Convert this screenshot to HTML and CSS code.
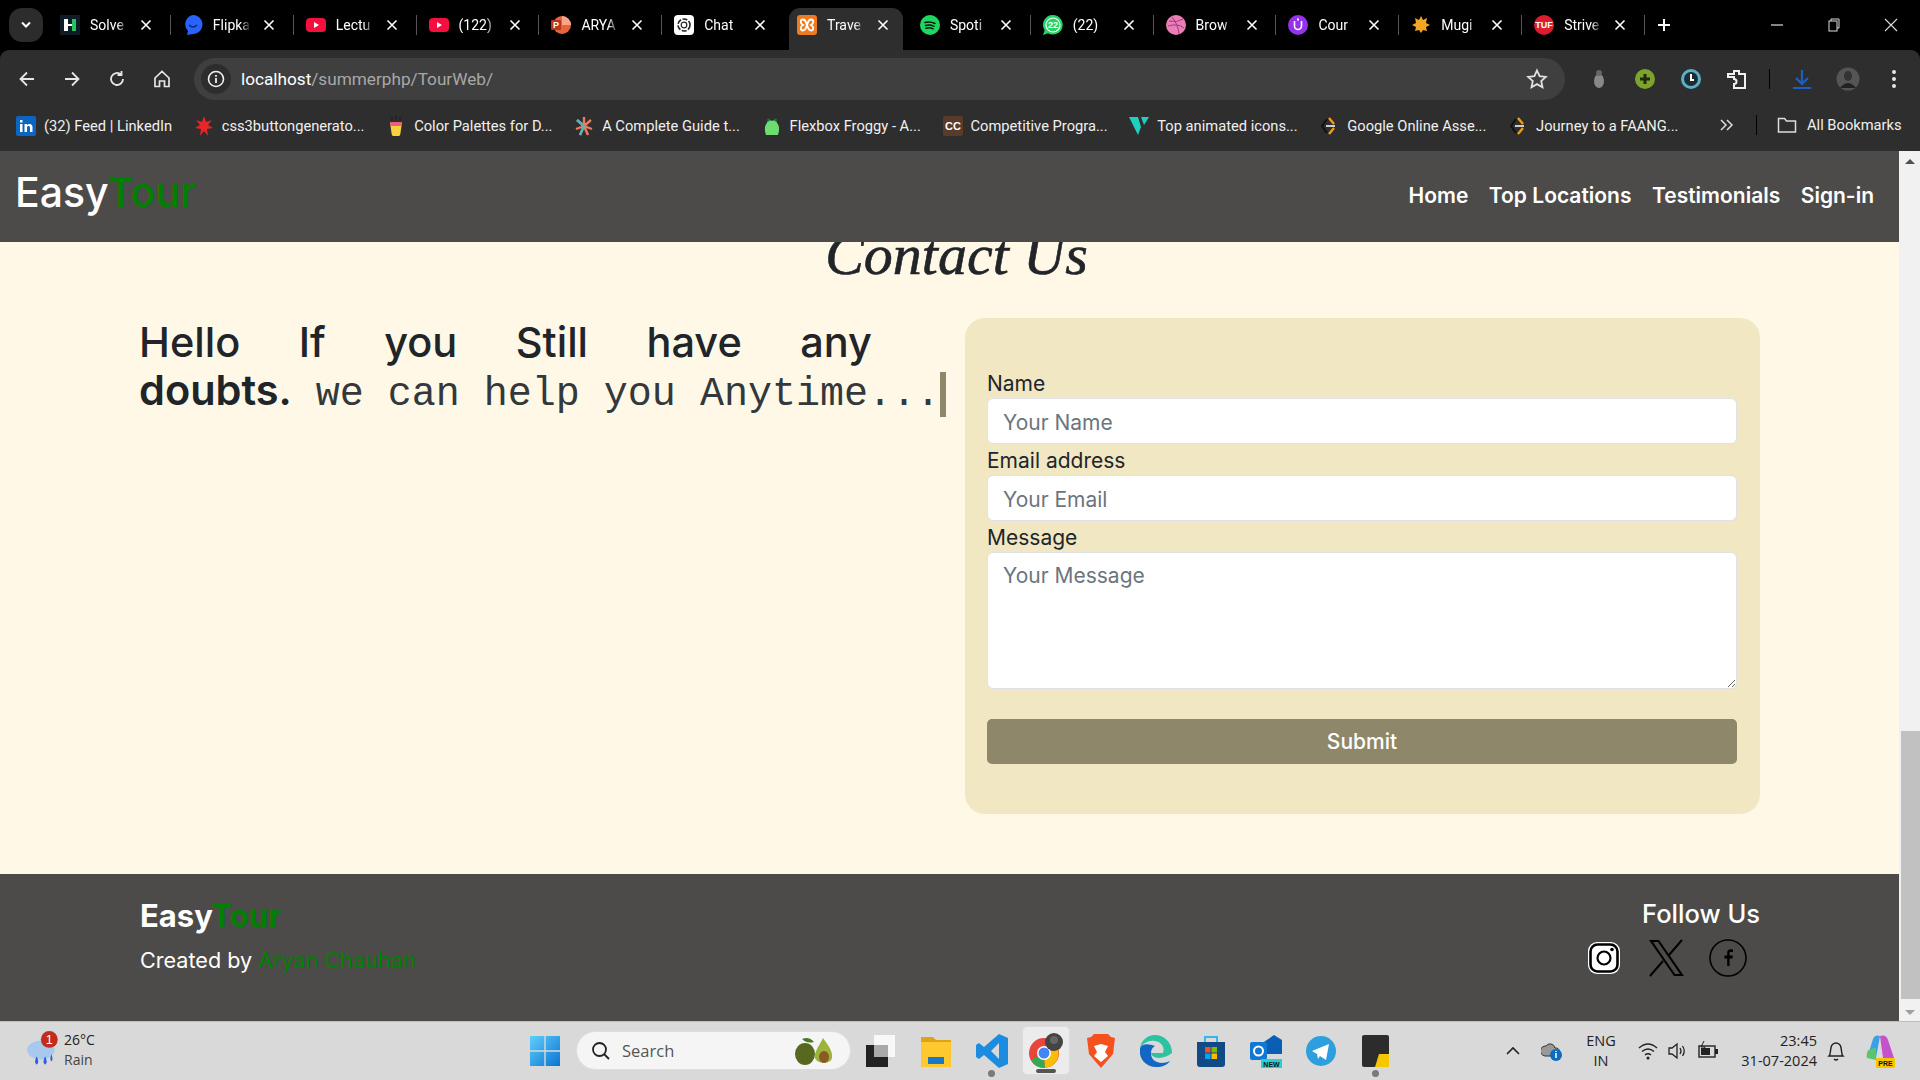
FILE: index.html
```html
<!DOCTYPE html>
<html lang="en">
<head>
<meta charset="utf-8">
<title>EasyTour - Contact</title>
<link rel="stylesheet" href="styles.css">
</head>
<body>
<svg class="defs" width="0" height="0">
  <symbol id="x" viewBox="0 0 14 14"><path d="M2.5 2.5l9 9M11.5 2.5l-9 9" stroke="#fff" stroke-width="1.6" fill="none"/></symbol>
  <symbol id="yt" viewBox="0 0 20 20"><rect x="0" y="3" width="20" height="14" rx="4" fill="#f40f3f"/><path d="M8 7l5 3-5 3z" fill="#fff"/></symbol>
  <symbol id="ga" viewBox="0 0 20 20"><path d="M8 3L3 10l5 7" fill="none" stroke="#111" stroke-width="2"/><path d="M10 2l5 6M15 12l-5 6" fill="none" stroke="#f39c12" stroke-width="2.4"/><rect x="7" y="9" width="9" height="2" fill="#ccc"/></symbol>
</svg>

<header class="chrome">
  <div class="tabstrip">
    <div class="tabmenu"><svg width="12" height="8" viewBox="0 0 12 8"><path d="M2 1.5l4 4 4-4" fill="none" stroke="#fff" stroke-width="2"/></svg></div>
    <div class="tab"><svg class="fav" viewBox="0 0 20 20"><rect width="20" height="20" fill="#0f1b26"/><rect x="4" y="4" width="4" height="12" fill="#fff"/><rect x="8" y="9" width="4" height="2" fill="#fff"/><rect x="12" y="4" width="4" height="12" fill="#22c55e"/></svg><span class="tabtitle">Solve</span><svg class="close"><use href="#x"/></svg></div>
    <div class="tab"><svg class="fav" viewBox="0 0 20 20"><path d="M10 0a9.500 9.500 0 0 1 3 18.500L4 20l1-4A9.500 9.500 0 0 1 10 0z" fill="#2962ff"/><path d="M6 10q4 4 8 0" stroke="#0d2a80" stroke-width="1.500" fill="none"/></svg><span class="tabtitle">Flipka</span><svg class="close"><use href="#x"/></svg></div>
    <div class="tab"><svg class="fav"><use href="#yt"/></svg><span class="tabtitle">Lectu</span><svg class="close"><use href="#x"/></svg></div>
    <div class="tab"><svg class="fav"><use href="#yt"/></svg><span class="tabtitle">(122)</span><svg class="close"><use href="#x"/></svg></div>
    <div class="tab"><svg class="fav" viewBox="0 0 20 20"><circle cx="11" cy="10" r="9" fill="#e8633a"/><path d="M11 1a9 9 0 0 1 9 9h-9z" fill="#f4a58c"/><rect x="0" y="5" width="10" height="10" rx="1" fill="#b7361a"/><text x="5" y="13" class="favtext" fill="#fff">P</text></svg><span class="tabtitle">ARYA</span><svg class="close"><use href="#x"/></svg></div>
    <div class="tab before-active"><svg class="fav" viewBox="0 0 20 20"><rect width="20" height="20" rx="4" fill="#fff"/><circle cx="10" cy="10" r="6" fill="none" stroke="#222" stroke-width="1.600" stroke-dasharray="5 1.500"/><circle cx="10" cy="10" r="2.800" fill="none" stroke="#222" stroke-width="1.200"/></svg><span class="tabtitle">Chat</span><svg class="close"><use href="#x"/></svg></div>
    <div class="tab active"><svg class="fav" viewBox="0 0 20 20"><rect width="20" height="20" rx="3" fill="#ee7a22"/><path d="M6 4.500c-3 0-3 4 0 5.500-3 1.500-3 5.500 0 5.500S9 12 10 10c1 2 1 5.500 4 5.500s3-4 0-5.500c3-1.500 3-5.500 0-5.500S11 8 10 10C9 8 9 4.500 6 4.500z" fill="none" stroke="#fff" stroke-width="1.800"/></svg><span class="tabtitle">Trave</span><svg class="close"><use href="#x"/></svg></div>
    <div class="tab"><svg class="fav" viewBox="0 0 20 20"><circle cx="10" cy="10" r="10" fill="#1ed760"/><path d="M5 7.500q5-1.500 10 1M5.500 10.500q4.500-1.200 8.500.8M6 13.200q4-1 7 .7" fill="none" stroke="#111" stroke-width="1.500" stroke-linecap="round"/></svg><span class="tabtitle">Spoti</span><svg class="close"><use href="#x"/></svg></div>
    <div class="tab"><svg class="fav" viewBox="0 0 20 20"><path d="M10 0a9.800 9.800 0 1 1-5 18.300L0 20l1.700-4.800A9.800 9.800 0 0 1 10 0z" fill="#25d366"/><circle cx="10" cy="10" r="7.600" fill="#fff"/><circle cx="10" cy="10" r="6.500" fill="#25d366"/><text x="10" y="13" class="favtext" fill="#fff">22</text></svg><span class="tabtitle">(22)</span><svg class="close"><use href="#x"/></svg></div>
    <div class="tab"><svg class="fav" viewBox="0 0 20 20"><circle cx="10" cy="10" r="10" fill="#ea7fb8"/><path d="M3 6q8 2 14-2M2 11q10-3 16 2M6 2q6 7 7 17" fill="none" stroke="#a33d78" stroke-width="1"/></svg><span class="tabtitle">Brow</span><svg class="close"><use href="#x"/></svg></div>
    <div class="tab"><svg class="fav" viewBox="0 0 20 20"><circle cx="10" cy="10" r="10" fill="#9333ea"/><path d="M6.500 6v5a3.500 3.500 0 0 0 7 0V6" fill="none" stroke="#fff" stroke-width="1.600"/><rect x="9" y="3.500" width="2" height="2" fill="#fff"/></svg><span class="tabtitle">Cour</span><svg class="close"><use href="#x"/></svg></div>
    <div class="tab"><svg class="fav" viewBox="0 0 20 20"><path d="M10 1l2 4 4-2-1 5 4 2-4 2 1 4-4-1-2 3-2-3-4 1 1-4-4-2 4-2-1-5 4 2z" fill="#f5a623"/></svg><span class="tabtitle">Mugi</span><svg class="close"><use href="#x"/></svg></div>
    <div class="tab"><svg class="fav" viewBox="0 0 20 20"><circle cx="10" cy="10" r="10" fill="#dd1c2f"/><text x="10" y="12.500" class="favtext" fill="#fff">TUF</text></svg><span class="tabtitle">Strive</span><svg class="close"><use href="#x"/></svg></div>
    <svg class="newtab" width="16" height="16" viewBox="0 0 16 16"><path d="M8 2v12M2 8h12" stroke="#fff" stroke-width="2"/></svg>
    <div class="winctl">
      <svg width="14" height="14" viewBox="0 0 14 14"><path d="M1 7h12" stroke="#ddd" stroke-width="1.200"/></svg>
      <svg width="14" height="14" viewBox="0 0 14 14"><path d="M4 3V1h8v9h-2" fill="none" stroke="#ddd"/><rect x="2" y="3" width="8" height="10" fill="none" stroke="#ddd"/></svg>
      <svg width="14" height="14" viewBox="0 0 14 14"><path d="M1 1l12 12M13 1L1 13" stroke="#ddd" stroke-width="1.100"/></svg>
    </div>
  </div>

  <div class="toolbar">
    <svg class="tbicon" viewBox="0 0 20 20"><path d="M17 10H4M10 3.500L3.500 10l6.500 6.500" fill="none" stroke="#e6e6e6" stroke-width="1.800"/></svg>
    <svg class="tbicon" viewBox="0 0 20 20"><path d="M3 10h13M10 3.500l6.500 6.500-6.500 6.500" fill="none" stroke="#e6e6e6" stroke-width="1.800"/></svg>
    <svg class="tbicon" viewBox="0 0 20 20"><path d="M16 10a6 6 0 1 1-2-4.500M14.500 2v4h-4" fill="none" stroke="#e6e6e6" stroke-width="1.800"/></svg>
    <svg class="tbicon" viewBox="0 0 20 20"><path d="M3 9l7-6.500L17 9v8.500h-4.500V12h-5v5.500H3z" fill="none" stroke="#e6e6e6" stroke-width="1.700"/></svg>
    <div class="omnibox">
      <span class="siteinfo"><svg width="18" height="18" viewBox="0 0 18 18"><circle cx="9" cy="9" r="7.500" fill="none" stroke="#f0f0f0" stroke-width="1.600"/><path d="M9 8v5M9 5v1.800" stroke="#f0f0f0" stroke-width="1.800"/></svg></span>
      <span class="url"><span class="host">localhost</span>/summerphp/TourWeb/</span>
      <svg class="star" width="22" height="22" viewBox="0 0 22 22"><path d="M11 2.500l2.600 5.700 6.200.7-4.600 4.200 1.300 6.100L11 16.100l-5.500 3.100 1.300-6.100-4.600-4.200 6.200-.7z" fill="none" stroke="#e2e2e2" stroke-width="1.800"/></svg>
    </div>
    <div class="extensions">
      <svg class="ext" viewBox="0 0 24 24"><ellipse cx="12" cy="14" rx="5" ry="7" fill="#888"/><circle cx="12" cy="6" r="3" fill="#666"/></svg>
      <svg class="ext" viewBox="0 0 24 24"><circle cx="12" cy="12" r="10" fill="#7ea32c"/><path d="M12 7v10M7 12h10" stroke="#1d2a0b" stroke-width="3"/></svg>
      <svg class="ext" viewBox="0 0 24 24"><circle cx="12" cy="12" r="10" fill="#5bb0c8"/><circle cx="12" cy="12" r="7" fill="#1d2b33"/><path d="M12 7v6h3" stroke="#fff" stroke-width="2" fill="none"/></svg>
      <svg class="ext" viewBox="0 0 24 24"><path d="M3 7h6V4h5v3h6v14H9v-4a2.500 2.500 0 0 0 0-5V10H3z" fill="none" stroke="#f0f0f0" stroke-width="2"/></svg>
      <span class="tbsep"></span>
      <svg class="ext" viewBox="0 0 24 24"><path d="M12 3v13M6 11l6 6 6-6M3 21h18" fill="none" stroke="#1c5fc4" stroke-width="2.200"/></svg>
      <svg class="ext" viewBox="0 0 24 24"><circle cx="12" cy="12" r="11.500" fill="#555"/><ellipse cx="12" cy="9" rx="4" ry="5" fill="#333"/><path d="M4 21q8-10 16 0" fill="#222"/></svg>
      <svg class="ext" viewBox="0 0 24 24"><circle cx="12" cy="5" r="2" fill="#e6e6e6"/><circle cx="12" cy="12" r="2" fill="#e6e6e6"/><circle cx="12" cy="19" r="2" fill="#e6e6e6"/></svg>
    </div>
  </div>

  <nav class="bookmarks">
    <a class="bm"><svg class="bmi" viewBox="0 0 20 20"><rect width="20" height="20" rx="2" fill="#0a66c2"/><path d="M4 8h2.500v8H4zM4 4h2.500v2.400H4zM8.500 8H11v1.200C12 7.500 16.500 7 16.500 11v5H14v-4.500c0-2-3-2-3 0V16H8.500z" fill="#fff"/></svg>(32) Feed | LinkedIn</a>
    <a class="bm"><svg class="bmi" viewBox="0 0 20 20"><path d="M10 0l2 6 6-2-4 5 5 3-6 1 1 7-4-5-4 5 1-7-6-1 5-3-4-5 6 2z" fill="#e8262a"/></svg>css3buttongenerato...</a>
    <a class="bm"><svg class="bmi" viewBox="0 0 20 20"><path d="M4 6h12l-1.500 11a4.500 4.500 0 0 1-9 0z" fill="#f7d23e"/><path d="M4 6h12l-.6 4H4.600z" fill="#ee5e7f"/><path d="M6 4V1M10 4V0M14 4V1" stroke="#222" stroke-width="1.500"/></svg>Color Palettes for D...</a>
    <a class="bm"><svg class="bmi" viewBox="0 0 20 20"><path d="M10 1v8M3 4l7 6M2 13l8-3M6 19l4-9M14 19l-4-9M18 13l-8-3M17 4l-7 6" stroke="#ef7b5a" stroke-width="2.400"/><path d="M3 4l7 6M6 19l4-9" stroke="#4db6c4" stroke-width="2.400"/></svg>A Complete Guide t...</a>
    <a class="bm"><svg class="bmi" viewBox="0 0 20 20"><path d="M4 19c-2-6-1-10 1-12a3 3 0 0 1 5-2 3 3 0 0 1 5 2c2 2 3 6 1 12z" fill="#6fdc6f"/><circle cx="6.500" cy="4" r="1.400" fill="#174"/><circle cx="13.500" cy="4" r="1.400" fill="#174"/></svg>Flexbox Froggy - A...</a>
    <a class="bm"><svg class="bmi" viewBox="0 0 20 20"><rect width="20" height="20" rx="2" fill="#5a3a28"/><text x="10" y="14" class="favtext cc" fill="#fff">CC</text></svg>Competitive Progra...</a>
    <a class="bm"><svg class="bmi" viewBox="0 0 20 20"><path d="M0 1h9l3 10-3 8zM12 1h8l-5 8z" fill="#1fd0c0"/></svg>Top animated icons...</a>
    <a class="bm"><svg class="bmi"><use href="#ga"/></svg>Google Online Asse...</a>
    <a class="bm"><svg class="bmi"><use href="#ga"/></svg>Journey to a FAANG...</a>
    <svg class="bmmore" width="16" height="16" viewBox="0 0 16 16"><path d="M3 3l5 5-5 5M9 3l5 5-5 5" fill="none" stroke="#ddd" stroke-width="1.500"/></svg>
    <span class="bmsep"></span>
    <a class="bm allbm"><svg class="bmi" viewBox="0 0 20 20"><path d="M1.500 3.500h6l2 2.500h9v11h-17z" fill="none" stroke="#ddd" stroke-width="1.500"/></svg>All Bookmarks</a>
  </nav>
</header>

<div class="viewport">
  <div class="page">
    <div class="sitenav">
      <div class="brand">Easy<span class="green">Tour</span></div>
      <ul class="navlinks">
        <li>Home</li>
        <li>Top Locations</li>
        <li>Testimonials</li>
        <li>Sign-in</li>
      </ul>
    </div>
    <main class="contact">
      <h1 class="contact-title">Contact Us</h1>
      <div class="contact-body">
        <div class="pitch">
          <p class="pitch-line">Hello If you Still have any</p>
          <p class="pitch-second"><strong>doubts.</strong> <span class="typed">we can help you Anytime...</span></p>
        </div>
        <form class="card">
          <label class="label" for="n">Name</label>
          <input class="field" id="n" type="text" placeholder="Your Name">
          <label class="label" for="e">Email address</label>
          <input class="field" id="e" type="email" placeholder="Your Email">
          <label class="label" for="m">Message</label>
          <textarea class="field area" id="m" placeholder="Your Message"></textarea>
          <button class="submit" type="button">Submit</button>
        </form>
      </div>
    </main>
    <footer class="footer">
      <div>
        <div class="foot-brand">Easy<span class="green">Tour</span></div>
        <div class="credit">Created by <span class="green">Aryan Chauhan</span></div>
      </div>
      <div class="follow">
        <div class="follow-title">Follow Us</div>
        <div class="socials">
          <svg class="ig" width="34" height="34" viewBox="0 0 34 34"><rect x="1" y="1" width="32" height="32" rx="9" fill="#fff"/><rect x="3.500" y="3.500" width="27" height="27" rx="7" fill="#fff" stroke="#000" stroke-width="2.600"/><circle cx="17" cy="17" r="6.500" fill="none" stroke="#000" stroke-width="2.200"/><circle cx="25" cy="8.500" r="1.800" fill="#000"/></svg>
          <svg class="xlogo" width="37" height="38" viewBox="0 0 37 38"><path d="M1 1h10l25 36H26zM5 3l22 32h5L10 3z" fill="#000" fill-rule="evenodd"/><path d="M34 1L21 16M15 22L2 37" stroke="#000" stroke-width="2" fill="none"/></svg>
          <svg class="fb" width="38" height="38" viewBox="0 0 38 38"><circle cx="19" cy="19" r="18" fill="none" stroke="#000" stroke-width="1.600"/><path d="M20.500 27v-7.500h3l.4-3h-3.400v-2c0-.9.3-1.400 1.500-1.400h2v-2.700c-2.900-.4-5.800-.2-5.800 3.700v2.400h-2.700v3h2.700V27z" fill="#000"/></svg>
        </div>
      </div>
    </footer>
  </div>
  <aside class="scrollbar">
    <span class="sb-up"></span>
    <span class="sb-track"><span class="sb-thumb"></span></span>
    <span class="sb-down"></span>
  </aside>
</div>

<div class="taskbar">
  <div class="weather">
    <svg width="34" height="40" viewBox="0 0 32 38"><ellipse cx="14" cy="18" rx="13" ry="9" fill="#a9c8ee"/><path d="M10 24q-3 6 0 8 3-2 0-8zM18 24q-3 6 0 8 3-2 0-8zM24 22q-2 5 0 7 2-2 0-7z" fill="#2a5fe0"/><circle cx="22" cy="8" r="8" fill="#c42b1c"/><text x="22" y="12" class="favtext badge" fill="#fff">1</text></svg>
    <div class="weather-text"><span>26°C</span><span>Rain</span></div>
  </div>
  <div class="tb-center">
    <svg class="winlogo" width="30" height="30" viewBox="0 0 30 30"><defs><linearGradient id="w" x1="0" y1="0" x2="1" y2="1"><stop offset="0" stop-color="#5fd0fb"/><stop offset="1" stop-color="#0a73d1"/></linearGradient></defs><path d="M0 0h14.300v14.300H0zM15.700 0H30v14.300H15.700zM0 15.700h14.300V30H0zM15.700 15.700H30V30H15.700z" fill="url(#w)"/></svg>
    <div class="searchbox">
      <svg width="20" height="20" viewBox="0 0 20 20"><circle cx="8.500" cy="8.500" r="6.500" fill="none" stroke="#222" stroke-width="1.800"/><path d="M13 13l5 5" stroke="#222" stroke-width="1.800"/></svg>
      <span class="search-text">Search</span>
      <svg class="avocado" width="40" height="30" viewBox="0 0 40 30"><ellipse cx="11" cy="18" rx="10" ry="11" fill="#56691f"/><path d="M29 2c6 8 10 14 9 20-1 6-14 7-17 0-1-6 4-12 8-20z" fill="#9bb43a"/><ellipse cx="30" cy="21" rx="5" ry="6" fill="#8a5a26"/><path d="M8 3q7-3 12 3-7 2-12-3z" fill="#4e7a28"/></svg>
    </div>
    <svg class="tv" width="30" height="32" viewBox="0 0 30 32"><rect x="8" y="0" width="21" height="22" fill="#f8f8f8"/><rect x="0" y="10" width="22" height="22" fill="#222"/><rect x="8" y="10" width="14" height="12" fill="#aaa"/></svg>
    <svg class="folder" width="30" height="32" viewBox="0 0 30 32"><path d="M0 2h12l3 3h15v5H0z" fill="#e0a21a"/><rect y="7" width="30" height="25" fill="#fdc92f"/><rect x="7" y="22" width="16" height="7" fill="#1a78c9"/></svg>
    <div class="app"><svg width="32" height="34" viewBox="0 0 32 34"><path d="M23 0l9 4v26l-9 4-15-13-5 4-3-2V11l3-2 5 4zM23 9l-8 8 8 8z" fill="#1c8ce0" fill-rule="evenodd"/></svg><span class="dot"></span></div>
    <div class="app chrome-app"><svg width="36" height="36" viewBox="0 0 36 36"><circle cx="16" cy="20" r="15" fill="#e8453c"/><path d="M16 20L3 27a15 15 0 0 0 14 8z" fill="#34a853"/><path d="M16 20l14-4a15 15 0 0 1-13 19z" fill="#fbbc05"/><circle cx="16" cy="20" r="7" fill="#fff"/><circle cx="16" cy="20" r="5.500" fill="#4285f4"/><circle cx="26" cy="9" r="9" fill="#444"/><circle cx="26" cy="7" r="4" fill="#666"/></svg><span class="dash"></span></div>
    <div class="app"><svg width="28" height="34" viewBox="0 0 28 34"><path d="M7 0h14l3 3 4 1-2 16-12 14L2 20 0 4l4-1z" fill="#f4511e"/><path d="M7 12l7-2 7 2-3 6 3 4-7 6-7-6 3-4z" fill="#fff"/></svg></div>
    <div class="app"><svg width="32" height="34" viewBox="0 0 32 34"><path d="M32 19C32 8 24 1 15 1 7 1 1 7 0 14c3-5 9-8 15-7 7 1 10 7 8 12H11c1 6 12 7 21 0z" fill="#2bc3a0"/><path d="M0 14c-2 11 7 20 17 19 5 0 10-2 13-6-8 4-19 2-19-8 0-4 2-6 4-7C9 10 3 9 0 14z" fill="#1266c4"/></svg></div>
    <div class="app"><svg width="30" height="34" viewBox="0 0 30 34"><path d="M9 8V3h12v5" fill="none" stroke="#35b6e8" stroke-width="2"/><path d="M1 8h28v22a3 3 0 0 1-3 3H4a3 3 0 0 1-3-3z" fill="#114b86"/><rect x="9" y="13" width="5.500" height="5.500" fill="#f25022"/><rect x="15.500" y="13" width="5.500" height="5.500" fill="#7fba00"/><rect x="9" y="19.500" width="5.500" height="5.500" fill="#00a4ef"/><rect x="15.500" y="19.500" width="5.500" height="5.500" fill="#ffb900"/></svg></div>
    <div class="app"><svg width="32" height="34" viewBox="0 0 32 34"><path d="M8 12L24 1l8 5v14H8z" fill="#0a5fb4"/><rect x="0" y="8" width="17" height="18" rx="2" fill="#0f78d4"/><circle cx="8.500" cy="17" r="4.500" fill="none" stroke="#fff" stroke-width="2"/><rect x="11" y="25" width="21" height="9" fill="#23d2d2"/><text x="21.500" y="32.500" class="favtext newbadge" fill="#111">NEW</text></svg></div>
    <div class="app"><svg width="30" height="30" viewBox="0 0 30 30"><circle cx="15" cy="15" r="15" fill="#2c9fdc"/><path d="M6 15L23 8l-3 16-6-4-2 3-1-5z" fill="#fff"/></svg></div>
    <div class="app"><svg width="27" height="32" viewBox="0 0 27 32"><rect width="27" height="32" rx="2" fill="#2c2c2c"/><path d="M13 32l4-13h10v13z" fill="#f6c700"/></svg><span class="dot"></span></div>
  </div>
  <div class="tb-right">
    <svg width="16" height="10" viewBox="0 0 16 10"><path d="M2 8l6-6 6 6" fill="none" stroke="#222" stroke-width="1.600"/></svg>
    <svg class="tr-cloud" width="22" height="22" viewBox="0 0 22 22"><path d="M4 16a5 5 0 0 1 1-10 5 5 0 0 1 9 2 4 4 0 0 1 1 8z" fill="#999" stroke="#333"/><circle cx="15" cy="15" r="6" fill="#0f6cbd"/><path d="M15 13v5M15 11v1" stroke="#fff" stroke-width="1.500"/></svg>
    <div class="lang"><span>ENG</span><span>IN</span></div>
    <svg class="tr-wifi" width="22" height="18" viewBox="0 0 22 18"><path d="M2 6q9-8 18 0M5 9.500q6-5 12 0M8 13q3-2.500 6 0" fill="none" stroke="#222" stroke-width="1.500"/><circle cx="11" cy="16" r="1.500" fill="#222"/></svg>
    <svg class="tr-vol" width="20" height="18" viewBox="0 0 20 18"><path d="M1 6h3l5-4v14l-5-4H1z" fill="none" stroke="#222" stroke-width="1.300"/><path d="M12 6q2 3 0 6M14.500 4q3.500 5 0 10" fill="none" stroke="#222" stroke-width="1.300"/></svg>
    <svg class="tr-batt" width="22" height="20" viewBox="0 0 22 20"><rect x="2" y="5" width="16" height="11" fill="none" stroke="#222" stroke-width="1.400"/><rect x="4" y="7" width="9" height="7" fill="#222"/><rect x="18" y="8" width="3" height="5" fill="#222"/><path d="M7 0L4 6h4l-2 5" fill="none" stroke="#222"/></svg>
    <div class="clock"><span>23:45</span><span>31-07-2024</span></div>
    <svg class="tr-bell" width="18" height="22" viewBox="0 0 18 22"><path d="M2 16c2-2 1-5 2-8a5 5 0 0 1 10 0c1 3 0 6 2 8z" fill="none" stroke="#222" stroke-width="1.400"/><path d="M7 19q2 2 4 0" fill="none" stroke="#222" stroke-width="1.400"/></svg>
    <svg class="tr-copilot" width="32" height="34" viewBox="0 0 32 34"><path d="M3 24L9 5q2-5 7-3L12 24z" fill="#3aa0e8"/><path d="M16 2q6-2 8 4l6 18H19z" fill="#c552c8"/><path d="M3 24q-2-10 9-10v12z" fill="#5cc46a"/><rect x="12" y="24" width="19" height="10" rx="1" fill="#f6c700"/><text x="21.500" y="32" class="favtext prebadge" fill="#111">PRE</text></svg>
  </div>
</div>
</body>
</html>
```

FILE: styles.css
```css
* { box-sizing: border-box; }
html, body { margin: 0; height: 100%; }
body {
  width: 1920px;
  height: 1080px;
  overflow: hidden;
  display: flex;
  flex-direction: column;
  font-family: Inter, "Open Sans", sans-serif;
  background: #000;
}
.defs { position: absolute; }
.green { color: #008000; }

/* browser chrome */
.chrome { flex: 0 0 151px; background: #000; font-family: Roboto, "Open Sans", sans-serif; color: #fff; }
.tabstrip { height: 50px; display: flex; align-items: center; padding-left: 9px; position: relative; }
.tabmenu { width: 34px; height: 34px; margin-right: 5px; border-radius: 13px; background: #2c2c2c; display: flex; align-items: center; justify-content: center; }
.tab { flex: 0 0 122.85px; height: 20px; padding-left: 12px; display: flex; align-items: center; border-right: 1px solid #555; font-size: 14px; }
.tab.active { flex-basis: 114px; height: 42px; align-self: flex-end; margin: 0 4.850px 0 4px; padding: 0 0 8px 8px; background: #2e2e2e; border-radius: 11px 11px 0 0; border-right: 0; }
.before-active { border-right: 0; }
.fav { width: 20px; height: 20px; flex: none; }
.tabtitle { width: 38px; margin-left: 10px; overflow: hidden; white-space: nowrap; -webkit-mask-image: linear-gradient(90deg, #000 72%, transparent); mask-image: linear-gradient(90deg, #000 72%, transparent); }
.close { width: 14px; height: 14px; margin-left: 11px; flex: none; }
.favtext { font-family: "Liberation Sans", sans-serif; font-size: 9px; font-weight: 700; text-anchor: middle; }
.favtext.cc { font-size: 11px; }
.favtext.badge { font-size: 12px; font-weight: 400; }
.favtext.newbadge, .favtext.prebadge { font-size: 7px; }
.newtab { margin-left: 11px; }
.winctl { position: absolute; right: 22px; top: 18px; display: flex; gap: 43px; }

.toolbar { height: 58px; background: #2e2e2e; border-radius: 9px 9px 0 0; display: flex; align-items: center; padding-left: 17px; }
.tbicon { width: 20px; height: 20px; margin-right: 25px; flex: none; }
.omnibox { width: 1371px; height: 42px; margin-left: -3px; background: #3f3f3f; border-radius: 21px; display: flex; align-items: center; padding: 0 17px 0 7px; }
.siteinfo { width: 30px; height: 30px; border-radius: 50%; background: #2d2d2d; display: flex; align-items: center; justify-content: center; }
.url { margin-left: 10px; font-size: 17.200px; color: #a8a8a8; white-space: nowrap; }
.host { color: #fff; }
.star { margin-left: auto; }
.extensions { display: flex; align-items: center; gap: 22px; margin-left: 22px; }
.ext { width: 24px; height: 24px; flex: none; }
.tbsep { width: 1px; height: 20px; background: #000; margin: 0 -2px; }

.bookmarks { height: 43px; background: #2e2e2e; display: flex; align-items: center; padding: 0 0 8px 16px; font-size: 14.700px; gap: 21.700px; position: relative; }
.bm { display: flex; align-items: center; gap: 8px; white-space: nowrap; color: #f0f0f0; }
.bmi { width: 20px; height: 20px; flex: none; }
.bmmore { position: absolute; left: 1718px; top: 9px; }
.bmsep { position: absolute; left: 1756px; top: 7px; width: 1px; height: 20px; background: #000; }
.allbm { position: absolute; left: 1777px; top: 7px; gap: 10px; }

/* page */
.viewport { flex: 0 0 870px; display: flex; background: #fff8e6; }
.page { width: 1899px; display: flex; flex-direction: column; overflow: hidden; }
.sitenav { flex: 0 0 91px; background: #4c4b49; display: flex; align-items: center; justify-content: space-between; padding: 0 25px 0 15px; position: relative; z-index: 1; }
.brand { font-size: 41px; font-weight: 500; color: #fff; transform: translateY(-5px); }
.navlinks { list-style: none; margin: 0; padding: 0; display: flex; gap: 20.500px; font-size: 21px; font-weight: 600; color: #fff; transform: translateY(-1px); }

.contact { flex: 1; background: #fff8e6; color: #212529; min-height: 0; }
.contact-title { margin: -25px 0 25px; padding-left: 14px; height: 76px; line-height: 76px; text-align: center; font-family: "Liberation Serif", serif; font-style: italic; font-weight: 400; font-size: 58px; -webkit-text-stroke: 0.6px #212529; }
.contact-body { display: flex; padding-left: 139px; }
.pitch { flex: 0 0 826px; }
.pitch-line { width: 733px; margin: 0; font-size: 41.500px; font-weight: 500; line-height: 48px; text-align: justify; text-align-last: justify; }
.pitch-second { margin: 0; height: 48px; font-size: 41.500px; line-height: 48px; white-space: nowrap; display: flex; align-items: center; gap: 24px; }
.pitch-second strong { font-weight: 600; }
.typed { font-family: "Liberation Mono", monospace; font-size: 40px; color: #33383c; border-right: 6px solid #8f8769; line-height: 45px; padding-right: 0; margin-top: 9px; }

.card { width: 795px; height: 496px; background: #f1e7c3; border-radius: 20px; padding: 49px 23px 0 22px; display: flex; flex-direction: column; }
.label { height: 31px; line-height: 33px; font-size: 21px; color: #212529; flex: none; }
.field { flex: none; width: 100%; height: 46px; border: 1px solid #dee2e6; border-radius: 6px; background: #fff; padding: 7px 15px 5px; font: 400 21px Inter, sans-serif; color: #212529; outline: 0; }
.field::placeholder { color: #6c757d; opacity: 1; }
.area { height: 137px; padding-top: 10px; resize: vertical; }
.submit { flex: none; margin-top: 30px; height: 45px; width: 100%; border: 0; border-radius: 5px; background: #8f8769; color: #fff; font: 500 21px Inter, sans-serif; }

.footer { flex: 0 0 147px; background: #4c4b49; display: flex; justify-content: space-between; padding: 20px 139px 0 140px; color: #fff; }
.foot-brand { font-size: 31px; font-weight: 700; line-height: 44px; }
.credit { font-size: 21.600px; line-height: 44px; }
.follow { display: flex; flex-direction: column; align-items: flex-end; }
.follow-title { font-size: 25.500px; font-weight: 500; line-height: 40px; }
.socials { display: flex; align-items: center; gap: 27px; margin: 5px 13px 0 0; }
.fb { margin-left: -3px; }

.scrollbar { width: 21px; background: #f1f1f1; display: flex; flex-direction: column; }
.sb-up, .sb-down { flex: 0 0 17px; position: relative; }
.sb-up::after, .sb-down::after { content: ""; position: absolute; left: 6px; border-left: 5px solid transparent; border-right: 5px solid transparent; }
.sb-up::after { top: 8px; border-bottom: 5px solid #505050; }
.sb-down::after { top: 6px; border-top: 5px solid #a0a0a0; }
.sb-track { flex: 1; position: relative; display: flex; flex-direction: column; justify-content: flex-end; padding-left: 2px; }
.sb-thumb { height: 268px; background: #c1c1c1; margin-bottom: 5px; }

/* taskbar */
.taskbar { flex: 0 0 59px; background: #d9d9d9; border-top: 1px solid #bdbdbd; display: flex; align-items: center; position: relative; font-family: "Open Sans", sans-serif; color: #222; }
.weather { display: flex; align-items: center; gap: 4px; margin-left: 26px; }
.weather-text { display: flex; flex-direction: column; font-size: 14px; line-height: 20px; transform: translateY(-1px); }
.weather-text span + span { color: #444; }
.tb-center { position: absolute; left: 530px; top: 0; height: 57px; display: flex; align-items: center; }
.searchbox { width: 275px; height: 39px; margin-left: 16px; border-radius: 20px; background: #f5f5f5; border: 1px solid #ddd; display: flex; align-items: center; padding: 0 16px 0 14px; gap: 11px; font-size: 16.500px; color: #555; }
.avocado { margin-left: auto; }
.tv { margin-left: 15px; }
.folder { margin-left: 25px; margin-right: 13px; }
.app { width: 55px; height: 49px; display: flex; align-items: center; justify-content: center; position: relative; flex: none; }
.chrome-app { width: 48px; margin: 0 3px; background: #ececec; border: 1px solid #dcdcdc; border-radius: 5px; }
.dot { position: absolute; bottom: -2px; left: 50%; width: 7px; height: 7px; margin-left: -4px; border-radius: 50%; background: #7a7a7a; }
.dash { position: absolute; bottom: 1px; left: 50%; width: 20px; height: 4px; margin-left: -10px; border-radius: 2px; background: #555; }
.tb-right { position: absolute; left: 1505px; top: 0; height: 57px; display: flex; align-items: center; }
.lang, .clock { display: flex; flex-direction: column; font-size: 14.500px; line-height: 20px; text-align: center; }
.clock { text-align: right; width: 80px; white-space: nowrap; margin-left: 18px; }
.tr-cloud { margin-left: 20px; }
.lang { width: 36px; margin-left: 20px; }
.tr-wifi { margin-left: 18px; }
.tr-vol { margin-left: 9px; }
.tr-batt { margin-left: 9px; }
.tr-bell { margin-left: 10px; }
.tr-copilot { margin-left: 19px; }
```
